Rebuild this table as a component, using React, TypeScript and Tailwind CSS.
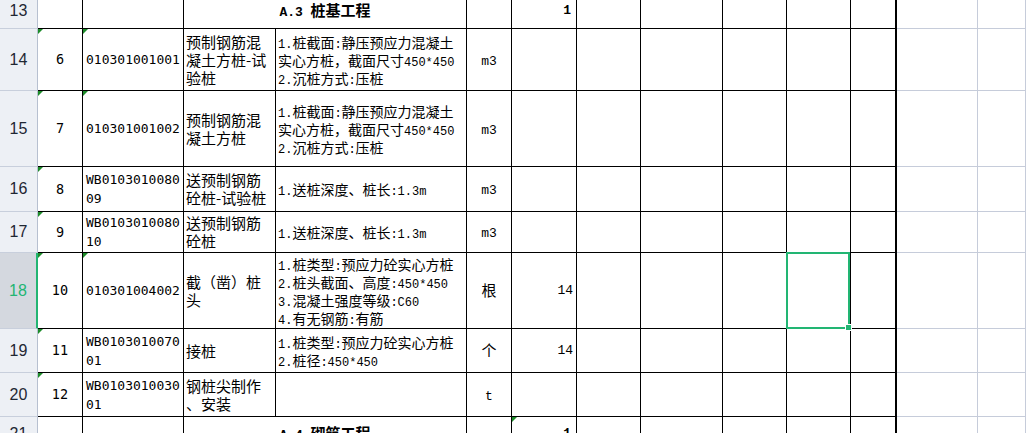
import React from 'react';

type Row = {
  n: number;
  h: string;
  section?: string;
  qty?: string;
  a?: string;
  b?: string[];
  c?: string[];
  d?: string[];
  e?: string;
  f?: string;
  triA?: boolean;
  triB?: boolean;
  triF?: boolean;
  selected?: boolean;
};

const cols =
  'grid grid-cols-[38px_45px_101px_92px_191px_45px_65px_64px_82px_64px_64px_46px_81px_1fr]';

const cjk = "font-['Noto_Sans_CJK_SC',sans-serif]";
const mono = "font-['Liberation_Mono','Noto_Sans_CJK_SC',monospace]";
const code = "font-['DejaVu_Sans_Mono',monospace]";

const rows: Row[] = [
  { n: 13, h: 'h-[35px]', section: 'A.3 桩基工程', qty: '1' },
  {
    n: 14, h: 'h-[62px]', a: '6', b: ['010301001001'],
    c: ['预制钢筋混', '凝土方桩-试', '验桩'],
    d: ['1.桩截面:静压预应力混凝土', '实心方桩，截面尺寸450*450', '2.沉桩方式:压桩'],
    e: 'm3', triA: true, triB: true,
  },
  {
    n: 15, h: 'h-[76px]', a: '7', b: ['010301001002'],
    c: ['预制钢筋混', '凝土方桩'],
    d: ['1.桩截面:静压预应力混凝土', '实心方桩，截面尺寸450*450', '2.沉桩方式:压桩'],
    e: 'm3', triA: true, triB: true,
  },
  {
    n: 16, h: 'h-[45px]', a: '8', b: ['WB0103010080', '09'],
    c: ['送预制钢筋', '砼桩-试验桩'], d: ['1.送桩深度、桩长:1.3m'], e: 'm3', triA: true,
  },
  {
    n: 17, h: 'h-[41px]', a: '9', b: ['WB0103010080', '10'],
    c: ['送预制钢筋', '砼桩'], d: ['1.送桩深度、桩长:1.3m'], e: 'm3', triA: true,
  },
  {
    n: 18, h: 'h-[76px]', a: '10', b: ['010301004002'],
    c: ['截（凿）桩', '头'],
    d: ['1.桩类型:预应力砼实心方桩', '2.桩头截面、高度:450*450', '3.混凝土强度等级:C60', '4.有无钢筋:有筋'],
    e: '根', f: '14', triA: true, triB: true, selected: true,
  },
  {
    n: 19, h: 'h-[44px]', a: '11', b: ['WB0103010070', '01'],
    c: ['接桩'], d: ['1.桩类型:预应力砼实心方桩', '2.桩径:450*450'], e: '个', f: '14', triA: true,
  },
  {
    n: 20, h: 'h-[44px]', a: '12', b: ['WB0103010030', '01'],
    c: ['钢桩尖制作', '、安装'], d: [], e: 't', triA: true,
  },
  { n: 21, h: 'h-[35px]', section: 'A.4 砌筑工程', qty: '1', triF: true },
];

function Mixed({ text, latin }: { text: string; latin: string }) {
  const parts = text.match(/[\x00-\x7f]+|[^\x00-\x7f]+/g) ?? [];
  return (
    <span className="whitespace-pre">
      {parts.map((p, i) =>
        /^[\x00-\x7f]/.test(p) ? (
          <span key={i} className={latin}>{p}</span>
        ) : (
          <span key={i}>{p}</span>
        )
      )}
    </span>
  );
}

function Tri() {
  return (
    <span className="absolute left-0 top-0 h-0 w-0 border-t-[5px] border-r-[5px] border-t-[#1d8c2a] border-r-transparent" />
  );
}

function Cell({
  children,
  className = '',
  tri,
}: {
  children?: React.ReactNode;
  className?: string;
  tri?: boolean;
}) {
  return (
    <div className={`relative overflow-hidden border-r border-b border-black ${className}`}>
      {tri && <Tri />}
      {children}
    </div>
  );
}

function GrayCell() {
  return <div className="border-r border-b border-[#c6ccda]" />;
}

function RowHeader({ n, selected }: { n: number; selected?: boolean }) {
  return (
    <div
      className={`flex items-center justify-center border-b border-[#c8cfdc] font-['Liberation_Sans',sans-serif] text-[16px] ${
        selected
          ? 'border-r-2 border-r-[#22b573] bg-[#d4d8df] text-[#22b573]'
          : 'border-r border-r-[#b7c0d0] bg-[#edf0f5] text-[#1f2733]'
      }`}
    >
      {n}
    </div>
  );
}

export default function App() {
  return (
    <div className="h-[433px] w-[1026px] overflow-hidden bg-white text-black">
      <div className="-mt-[6px]">
        {rows.map(r => (
          <div key={r.n} className={`${cols} ${r.h}`}>
            <RowHeader n={r.n} selected={r.selected} />
            {r.section ? (
              <>
                <Cell />
                <Cell />
                <Cell className={`col-span-2 flex items-center justify-center whitespace-nowrap text-[15px] font-bold ${cjk}`}>
                  <Mixed text={r.section} latin={`${mono} text-[13px]`} />
                </Cell>
                <Cell />
                <Cell tri={r.triF} className={`flex items-center justify-end pr-[5px] text-[13px] font-bold ${mono}`}>
                  {r.qty}
                </Cell>
              </>
            ) : (
              <>
                <Cell tri={r.triA} className={`flex items-center justify-center text-[13.5px] ${code}`}>
                  {r.a}
                </Cell>
                <Cell tri={r.triB} className={`flex flex-col justify-center pl-[3px] text-[13px] ${code}`}>
                  {r.b?.map(l => (
                    <div key={l} className="h-[19px] whitespace-nowrap leading-[19px]">{l}</div>
                  ))}
                </Cell>
                <Cell className={`flex flex-col justify-center pl-[2px] text-[15px] ${cjk}`}>
                  {r.c?.map(l => (
                    <div key={l} className="h-[18px] whitespace-nowrap leading-[18px]">{l}</div>
                  ))}
                </Cell>
                <Cell className={`flex flex-col justify-center pl-[2px] text-[14px] ${cjk}`}>
                  {r.d?.map(l => (
                    <div key={l} className="h-[18px] whitespace-nowrap leading-[18px]">
                      <Mixed text={l} latin={`${mono} text-[12px] leading-[18px]`} />
                    </div>
                  ))}
                </Cell>
                <Cell className={`flex items-center justify-center text-[15px] ${cjk}`}>
                  {r.e && <Mixed text={r.e} latin={`${mono} text-[13px]`} />}
                </Cell>
                <Cell className={`flex items-center justify-end pr-[3px] text-[13px] ${mono}`}>
                  {r.f}
                </Cell>
              </>
            )}
            <Cell />
            <Cell />
            <Cell />
            <div className="relative border-r border-b border-black">
              {r.selected && (
                <div className="pointer-events-none absolute -left-px -top-px right-0 -bottom-px z-10 border-2 border-[#22b573]">
                  <span className="absolute -right-[4px] -bottom-[4px] h-[7px] w-[7px] border border-white bg-[#22b573]" />
                </div>
              )}
            </div>
            <div className="border-r-2 border-b border-black" />
            <GrayCell />
            <GrayCell />
          </div>
        ))}
      </div>
    </div>
  );
}
